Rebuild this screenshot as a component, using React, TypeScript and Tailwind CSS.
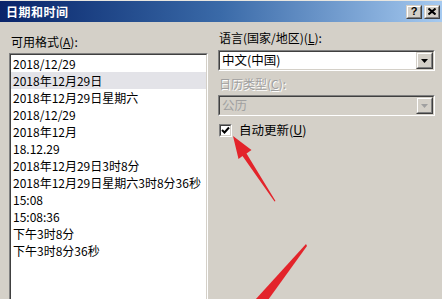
import React from "react";

const font = { fontFamily: '"Noto Sans CJK SC", "Noto Sans", sans-serif' };

const formats = [
  "2018/12/29",
  "2018年12月29日",
  "2018年12月29日星期六",
  "2018/12/29",
  "2018年12月",
  "18.12.29",
  "2018年12月29日3时8分",
  "2018年12月29日星期六3时8分36秒",
  "15:08",
  "15:08:36",
  "下午3时8分",
  "下午3时8分36秒",
];

const Sunken = ({ className, children }: { className?: string; children: React.ReactNode }) => (
  <div className={`border border-t-[#808080] border-l-[#808080] border-b-white border-r-white ${className ?? ""}`}>
    <div className="h-full border border-t-[#404040] border-l-[#404040] border-b-[#d4d0c8] border-r-[#d4d0c8]">{children}</div>
  </div>
);

const Raised = ({ className, children }: { className?: string; children: React.ReactNode }) => (
  <div className={`border border-t-[#d4d0c8] border-l-[#d4d0c8] border-b-[#404040] border-r-[#404040] bg-[#d4d0c8] ${className ?? ""}`}>
    <div className="h-full flex items-center justify-center border border-t-white border-l-white border-b-[#808080] border-r-[#808080]">
      {children}
    </div>
  </div>
);

const Combo = ({ value, disabled }: { value: string; disabled?: boolean }) => (
  <Sunken className="h-[21px]">
    <div className={`h-full flex items-center ${disabled ? "bg-[#d4d0c8]" : "bg-white"}`}>
      <span className={`flex-1 pl-[2px] text-[12.5px] leading-none ${disabled ? "text-[#a0a0a0]" : "text-black"}`}>{value}</span>
      <Raised className="w-[17px] h-[17px]">
        <svg width="7" height="4" viewBox="0 0 7 4">
          <polygon points="0,0 7,0 3.5,4" fill={disabled ? "#a0a0a0" : "#000"} />
        </svg>
      </Raised>
    </div>
  </Sunken>
);

export default function App() {
  return (
    <div className="relative w-[442px] h-[299px] overflow-hidden bg-[#d4d0c8] text-black" style={font}>
      <div className="h-px bg-[#e8e6e0]" />
      <div className="h-[21px] flex items-center justify-between pl-[6px] pr-[2px] bg-gradient-to-r from-[#0a246a] via-[#3a6aa8] to-[#a6caf0]">
        <span className="text-white text-[12px] font-bold tracking-[0.5px] leading-none">日期和时间</span>
        <div className="flex gap-[2px]">
          <Raised className="w-[16px] h-[14px]">
            <span className="text-[11px] font-bold leading-none" style={{ fontFamily: '"Liberation Sans", sans-serif' }}>?</span>
          </Raised>
          <Raised className="w-[16px] h-[14px]">
            <svg width="8" height="7" viewBox="0 0 8 7">
              <path d="M0.5 0.5 L7.5 6.5 M7.5 0.5 L0.5 6.5" stroke="#000" strokeWidth="2" />
            </svg>
          </Raised>
        </div>
      </div>

      <div className="flex pl-[9px] gap-[10px]">
        <div className="w-[199px] pt-[13px]">
          <div className="text-[12px] leading-[14px] pl-[2px]">
            可用格式(<span className="underline">A</span>):
          </div>
          <Sunken className="mt-[4px] h-[260px]">
            <div className="h-full bg-white overflow-hidden">
              {formats.map((f, i) => (
                <div
                  key={i}
                  className={`h-[17px] flex items-center pl-[2px] text-[12px] leading-none whitespace-nowrap ${i === 1 ? "bg-[#e3e3e8]" : ""}`}
                >
                  {f}
                </div>
              ))}
            </div>
          </Sunken>
        </div>

        <div className="w-[217px] pt-[9px]">
          <div className="text-[12px] leading-[14px] pl-[1px]">
            语言(国家/地区)(<span className="underline">L</span>):
          </div>
          <div className="mt-[5px]">
            <Combo value="中文(中国)" />
          </div>
          <div className="mt-[6px] text-[12px] leading-[14px] pl-[1px] text-[#a0a0a0]" style={{ textShadow: "1px 1px 0 #ffffff" }}>
            日历类型(<span className="underline">C</span>):
          </div>
          <div className="mt-[4px]">
            <Combo value="公历" disabled />
          </div>
          <div className="mt-[7px] flex items-center gap-[7px] pl-px">
            <Sunken className="w-[13px] h-[13px]">
              <div className="h-full bg-white flex items-center justify-center">
                <svg width="9" height="9" viewBox="0 0 9 9">
                  <path d="M1 4 L3.5 6.5 L8 1.5" stroke="#000" strokeWidth="2" fill="none" />
                </svg>
              </div>
            </Sunken>
            <span className="text-[12.5px] leading-[14px]">
              自动更新(<span className="underline">U</span>)
            </span>
          </div>
        </div>
      </div>

      <svg className="absolute inset-0 pointer-events-none" width="442" height="299" viewBox="0 0 442 299">
        <polygon points="233,136 251.5,150 246.5,153.5 275.5,201 274.5,201.5 242.5,156 238.5,159" fill="#e3242b" />
        <polygon points="306,244 307,246 268,300 255,300" fill="#e3242b" />
      </svg>
    </div>
  );
}
